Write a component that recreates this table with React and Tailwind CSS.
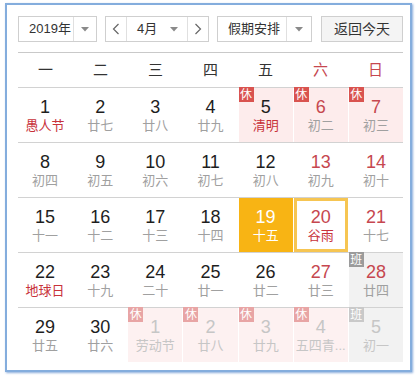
import React from "react";

const CJK = { fontFamily: '"Liberation Sans", "Noto Sans CJK SC", sans-serif' };

function Arrow() {
  return (
    <svg width="8" height="5" viewBox="0 0 8 5">
      <polygon points="0,0 8,0 4,4.5" fill="#8a8a8a" />
    </svg>
  );
}

function Chevron({ dir }) {
  return (
    <svg width="8" height="12" viewBox="0 0 8 12">
      {dir === "l" ? (
        <polyline points="6.5,1 1.5,6 6.5,11" fill="none" stroke="#666" strokeWidth="1.2" />
      ) : (
        <polyline points="1.5,1 6.5,6 1.5,11" fill="none" stroke="#666" strokeWidth="1.2" />
      )}
    </svg>
  );
}

const rows = [
  [
    { n: 1, l: "愚人节", lr: true },
    { n: 2, l: "廿七" },
    { n: 3, l: "廿八" },
    { n: 4, l: "廿九" },
    { n: 5, l: "清明", lr: true, bg: "rest", badge: "休" },
    { n: 6, l: "初二", we: true, bg: "rest", badge: "休" },
    { n: 7, l: "初三", we: true, bg: "rest", badge: "休" },
  ],
  [
    { n: 8, l: "初四" },
    { n: 9, l: "初五" },
    { n: 10, l: "初六" },
    { n: 11, l: "初七" },
    { n: 12, l: "初八" },
    { n: 13, l: "初九", we: true },
    { n: 14, l: "初十", we: true },
  ],
  [
    { n: 15, l: "十一" },
    { n: 16, l: "十二" },
    { n: 17, l: "十三" },
    { n: 18, l: "十四" },
    { n: 19, l: "十五", sel: true },
    { n: 20, l: "谷雨", lr: true, we: true, today: true },
    { n: 21, l: "十七", we: true },
  ],
  [
    { n: 22, l: "地球日", lr: true },
    { n: 23, l: "十九" },
    { n: 24, l: "二十" },
    { n: 25, l: "廿一" },
    { n: 26, l: "廿二" },
    { n: 27, l: "廿三", we: true },
    { n: 28, l: "廿四", we: true, bg: "work", badge: "班" },
  ],
  [
    { n: 29, l: "廿五" },
    { n: 30, l: "廿六" },
    { n: 1, l: "劳动节", bg: "rest", badge: "休", fade: true },
    { n: 2, l: "廿八", bg: "rest", badge: "休", fade: true },
    { n: 3, l: "廿九", bg: "rest", badge: "休", fade: true },
    { n: 4, l: "五四青...", bg: "rest", badge: "休", fade: true },
    { n: 5, l: "初一", bg: "work", badge: "班", fade: true },
  ],
];

function Cell({ c }) {
  let bg = "bg-white";
  if (c.bg === "rest") bg = c.fade ? "bg-[#fdf1f1]" : "bg-[#fdecec]";
  if (c.bg === "work") bg = "bg-[#f2f2f2]";
  if (c.sel) bg = "bg-[#f8b414]";
  let numColor = c.we ? "text-[#c6474f]" : "text-[#1e1e1e]";
  let lunColor = c.lr ? "text-[#c8323a]" : "text-[#a0a0a0]";
  if (c.fade) {
    numColor = "text-[#c6c6c6]";
    lunColor = "text-[#c6c6c6]";
  }
  if (c.sel) {
    numColor = "text-white";
    lunColor = "text-white";
  }
  let badgeBg = "";
  if (c.badge === "休") badgeBg = c.fade ? "bg-[#e8a5a5]" : "bg-[#d9534f]";
  if (c.badge === "班") badgeBg = c.fade ? "bg-[#c9c9c9]" : "bg-[#9b9b9b]";
  return (
    <div className={`relative h-full flex flex-col items-center ${bg} ${c.today ? "border-[3px] border-[#f6c552] pt-[5px]" : "pt-[8px]"}`}>
      {c.badge && (
        <div className={`absolute left-0 top-[-1px] w-[15px] h-[15px] flex items-center justify-center text-white text-[12px] leading-none ${badgeBg}`}>
          {c.badge}
        </div>
      )}
      <div className={`text-[18px] leading-[22px] ${numColor}`}>{c.n}</div>
      <div className={`text-[13px] leading-[16px] whitespace-nowrap ${lunColor}`}>{c.l}</div>
    </div>
  );
}

export default function App() {
  const week = ["一", "二", "三", "四", "五", "六", "日"];
  return (
    <div className="w-[417px] h-[376px] bg-white overflow-hidden" style={CJK}>
      <div className="ml-[5px] mt-[3px] w-[407px] h-[369px] border-2 border-[#84addd] shadow-[1px_1px_2px_rgba(90,140,205,0.7)] pl-[11px] pr-[7px] pt-[11px]">
        {/* controls */}
        <div className="flex h-[26px] text-[13px] text-[#333] whitespace-nowrap">
          <div className="w-[79px] h-full flex border border-[#cfcfcf] bg-white">
            <div className="flex-1 flex items-center pl-[10px]">2019年</div>
            <div className="w-[23px] border-l border-[#e0e0e0] flex items-center justify-center">
              <Arrow />
            </div>
          </div>
          <div className="ml-[8px] w-[104px] h-full flex border border-[#cfcfcf] bg-white">
            <div className="w-[21px] flex items-center justify-center border-r border-[#e0e0e0]">
              <Chevron dir="l" />
            </div>
            <div className="flex-1 flex items-center pl-[10px]">
              <span>4月</span>
              <span className="ml-[13px] flex">
                <Arrow />
              </span>
            </div>
            <div className="w-[21px] flex items-center justify-center border-l border-[#e0e0e0]">
              <Chevron dir="r" />
            </div>
          </div>
          <div className="ml-[8px] w-[95px] h-full flex border border-[#cfcfcf] bg-white">
            <div className="flex-1 flex items-center pl-[10px]">假期安排</div>
            <div className="w-[25px] border-l border-[#e0e0e0] flex items-center justify-center">
              <Arrow />
            </div>
          </div>
          <div className="ml-[9px] w-[82px] h-full flex items-center justify-center border border-[#cfcfcf] bg-[#f4f4f4] text-[14px]">
            返回今天
          </div>
        </div>
        <div className="mt-[10px] border-t border-[#c9c9c9]" />
        {/* header */}
        <div className="grid grid-cols-7 h-[34px] text-[15px]">
          {week.map((w, i) => (
            <div key={w} className={`flex items-center justify-center ${i >= 5 ? "text-[#c6474f]" : "text-[#333]"}`}>
              {w}
            </div>
          ))}
        </div>
        {rows.map((r, ri) => (
          <div key={ri} className="border-t border-[#d2d2d2] h-[55px] grid grid-cols-7 gap-x-px">
            {r.map((c, ci) => (
              <Cell key={ci} c={c} />
            ))}
          </div>
        ))}
      </div>
    </div>
  );
}
